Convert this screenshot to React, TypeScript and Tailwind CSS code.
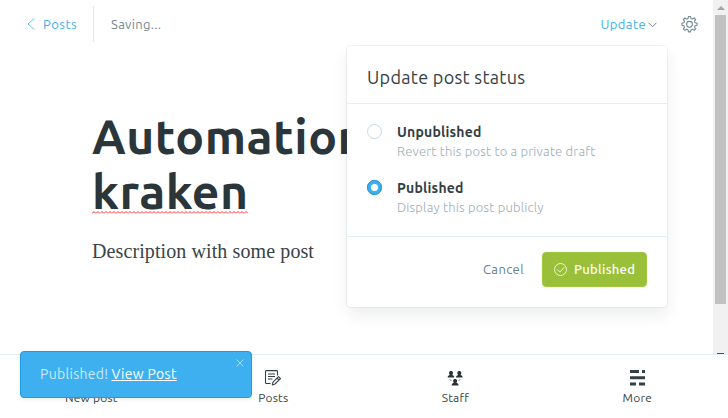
import React from "react";

const sans = "font-['Ubuntu','Noto_Sans',sans-serif]";

function GearIcon() {
  return (
    <svg className="h-[17px] w-[17px]" viewBox="0.500 0.800 17 17" fill="none" stroke="#738a94" strokeWidth="1.100" strokeLinejoin="round">
      <path d="m7.600 3.300.4-2h2l.4 2 1.500.6 1.700-1.100 1.500 1.500-1.100 1.700.6 1.500 2 .4v2.200l-2 .4-.6 1.500 1.100 1.700-1.500 1.500-1.700-1.100-1.500.6-.4 2H8l-.4-2-1.500-.6-1.700 1.100-1.500-1.500L4 12l-.6-1.500-2-.4V7.900l2-.4L4 6 2.900 4.300l1.500-1.500 1.700 1.100z" />
      <circle cx="9" cy="9.100" r="2.900" />
    </svg>
  );
}

function PostsIcon() {
  return (
    <svg className="h-4 w-4" viewBox="0 0 16 16" fill="none" stroke="#343f44" strokeWidth="1.100" strokeLinejoin="round">
      <path d="M12.500 5.500v-4a.9.9 0 0 0-.9-.9H1.400a.9.9 0 0 0-.9.9v11c0 .6.4 1 .9 1h4.200M3 4h7M3 6.500h7M3 9h4.500" />
      <path d="m7.300 14.900.7-2.700 5.500-5.500 2 2L10 14zM12 8l2 2" />
    </svg>
  );
}

function StaffIcon() {
  return (
    <svg className="h-4 w-4" viewBox="0 0 16 16" fill="#2a3236">
      <path d="M2 2.700C2 .5 6 .5 6 2.700c0 .9-.4 1.700-.8 2.200 1 .3 2.100.7 2.100 2.600H.6c0-1.900 1.300-2.300 2.200-2.600C2.400 4.400 2 3.600 2 2.700zM10.300 2.700c0-2.200 4-2.200 4 0 0 .9-.4 1.700-.8 2.200.9.300 2.200.7 2.200 2.600H9c0-1.900 1.200-2.300 2.100-2.600-.4-.5-.8-1.300-.8-2.200zM6.100 10.700c0-2.200 4-2.200 4 0 0 .9-.4 1.700-.8 2.100.9.300 2.300.7 2.300 2.600H4.600c0-1.900 1.400-2.300 2.300-2.600-.4-.4-.8-1.200-.8-2.100z" />
      <path d="m2.500 9 2 2M13.500 9l-2 2" stroke="#829096" />
    </svg>
  );
}

function MoreIcon() {
  return (
    <svg className="h-4 w-[15px]" viewBox="0 0 15 16" fill="#343f44">
      <path d="M0 0h9v3H0zM12 0h3v3h-3zM0 6.300h15v3H0zM0 12.500h6v3H0zM9 12.500h6v3H9z" />
    </svg>
  );
}

function NavItem({ icon, children }: { icon?: React.ReactNode; children: React.ReactNode }) {
  return (
    <div className="flex flex-1 flex-col items-center pt-[15px]">
      <div className="flex h-4 items-center justify-center">{icon}</div>
      <span className="mt-[3px] pl-[0.6px] text-[12px] leading-[18px] tracking-[0.2px] text-[#343f44]">{children}</span>
    </div>
  );
}

function Option({ title, text, checked }: { title: React.ReactNode; text: React.ReactNode; checked?: boolean }) {
  return (
    <div className="flex h-14">
      <span
        className={
          checked
            ? "mt-[4px] h-[15px] w-[15px] rounded-full border-4 border-[#3eb0ef] bg-white outline-1 -outline-offset-1 outline-[#1e96d8]"
            : "mt-[4px] h-[15px] w-[15px] rounded-full border border-[#c5d9e8] bg-white"
        }
      />
      <div className="ml-[15px] flex flex-col whitespace-nowrap">
        <span className="text-[14px] leading-6 font-semibold tracking-[0.2px] text-[#343f44]">{title}</span>
        <span className="text-[13px] leading-[14px] font-light tracking-[0.22px] text-[#9baeb8]">{text}</span>
      </div>
    </div>
  );
}

export default function App() {
  return (
    <div className={`relative flex h-[418px] w-[728px] flex-col overflow-hidden bg-white ${sans}`}>
      <div className="flex h-[354px]">
        <main className="flex w-[713px] flex-col">
          <header className="flex h-12 items-center pl-[27px] text-[13px]">
            <svg className="h-3 w-2" viewBox="0 0 8 12" fill="none" stroke="#3eb0ef" strokeWidth=".8">
              <path d="M7.500.3 1 6l6.500 5.700" />
            </svg>
            <span className="mt-px ml-2 w-[50px] tracking-[0.5px] text-[#3eb0ef]">Posts</span>
            <span className="h-9 w-px bg-[#dfe9f1]" />
            <span className="mt-px ml-[17px] tracking-[0.3px] text-[#738a94]">Saving...</span>
            <span className="mt-px ml-auto tracking-[0.4px] text-[#3eb0ef]">Update</span>
            <svg className="mt-[2px] ml-[2px] h-[6px] w-[9px]" viewBox="0 0 9 6" fill="none" stroke="#738a94">
              <path d="m.5.700 4 4 4-4" />
            </svg>
            <span className="mr-[15px] ml-6"><GearIcon /></span>
          </header>
          <article className="pt-[61px] pl-[92px]">
            <h1 className="text-[48px] leading-[55px] font-bold tracking-[0.5px] text-[#2b363b]">
              <span className="block">Automation</span>
              <span className="relative block w-[156px]">
                kraken
                <svg className="absolute top-[47px] left-0 h-[3px] w-[156px]" viewBox="0 0 156 3" fill="none">
                  <defs>
                    <pattern id="spell" width="4" height="3" patternUnits="userSpaceOnUse">
                      <path d="M0 2.500 2 .5l2 2" stroke="#ff2b32" />
                    </pattern>
                  </defs>
                  <rect width="156" height="3" fill="url(#spell)" />
                </svg>
              </span>
            </h1>
            <p className="mt-4 font-['Liberation_Serif',serif] text-[20px] leading-8 tracking-[0.1px] text-[#394348]">Description with some post</p>
          </article>
        </main>
        <aside className="flex w-[15px] flex-col items-center bg-[#f1f1f1]">
          <div className="flex h-[15px] items-center">
            <span className="border-x-4 border-b-4 border-x-transparent border-b-[#a3a3a3]" />
          </div>
          <div className="h-[289px] w-[11px] bg-[#c1c1c1]" />
          <span className="mt-auto h-px w-[7px] bg-[#505050]" />
        </aside>
      </div>

      <nav className="flex h-16 border-t border-[#e3edf4]">
        <NavItem>New post</NavItem>
        <NavItem icon={<PostsIcon />}>Posts</NavItem>
        <NavItem icon={<StaffIcon />}>Staff</NavItem>
        <NavItem icon={<MoreIcon />}>More</NavItem>
      </nav>

      <section className="absolute top-[46px] left-[347px] h-[261px] w-80 rounded-[4px] bg-white shadow-[0_0_0_1px_rgba(99,114,130,0.08),0_8px_16px_rgba(27,39,51,0.08)]">
        <h2 className="flex h-[58px] items-center border-b border-[#e3edf4] px-5 pt-[5px] text-[18px] tracking-[0.3px] whitespace-nowrap text-[#343f44]">Update post status</h2>
        <div className="h-[133px] border-b border-[#e3edf4] px-5 pt-4">
          <Option title="Unpublished" text="Revert this post to a private draft" />
          <Option title="Published" text="Display this post publicly" checked />
        </div>
        <footer className="flex items-center justify-end px-5 pt-[15px] text-[13px]">
          <span className="mr-[18px] tracking-[0.4px] text-[#677f89]">Cancel</span>
          <button className="flex h-[35px] w-[105px] items-center rounded-[4px] border border-[#a0c83c] bg-[#9abf38] pl-[11px] font-medium tracking-[0.3px] text-white">
            <svg className="h-[13px] w-[13px]" viewBox="0 0 13 13" fill="none" stroke="white" strokeWidth=".8">
              <circle cx="6.500" cy="6.500" r="6" />
              <path d="m3.300 6.500 2.500 2.600 4.700-5" />
            </svg>
            <span className="ml-[7px]">Published</span>
          </button>
        </footer>
      </section>

      <div className="absolute top-[351px] left-5 flex h-[47px] w-[232px] items-center rounded-[4px] border border-[#1e9be3] bg-[#3eb0ef] pl-[19px] text-[14px] tracking-[0.3px] shadow-[0_1px_5px_rgba(0,0,0,0.08)]">
        <span className="text-[#cbeafb]">Published!</span>
        <span className="ml-[3px] text-white underline underline-offset-1">View Post</span>
        <svg className="absolute top-[7px] right-[7px] h-2 w-2" viewBox="0 0 8 8" stroke="#c5e7fb" strokeWidth=".8">
          <path d="m.5.500 7 7m0-7-7 7" />
        </svg>
      </div>
    </div>
  );
}
